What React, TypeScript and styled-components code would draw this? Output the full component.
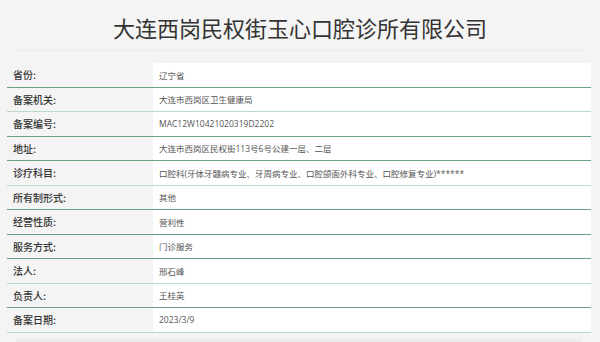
import React from 'react'
import styled, { createGlobalStyle } from 'styled-components'

type RowType = {
  label: string
  value: string
  soft?: boolean
}

const rows: RowType[] = [
  { label: '省份:', value: '辽宁省' },
  { label: '备案机关:', value: '大连市西岗区卫生健康局', soft: true },
  { label: '备案编号:', value: 'MAC12W10421020319D2202' },
  { label: '地址:', value: '大连市西岗区民权街113号6号公建一层、二层' },
  { label: '诊疗科目:', value: '口腔科(牙体牙髓病专业、牙周病专业、口腔颌面外科专业、口腔修复专业)******', soft: true },
  { label: '所有制形式:', value: '其他' },
  { label: '经营性质:', value: '营利性' },
  { label: '服务方式:', value: '门诊服务' },
  { label: '法人:', value: '邢石峰', soft: true },
  { label: '负责人:', value: '王桂英' },
  { label: '备案日期:', value: '2023/3/9', soft: true },
]

const GlobalStyle = createGlobalStyle`
  html, body {
    margin: 0;
    padding: 0;
    background: #f4f4f4;
    font-family: "Open Sans", "Noto Sans CJK SC", sans-serif;
  }
`

const App = () => {
  return (
    <Page>
      <GlobalStyle />
      <Header>
        <Title>大连西岗民权街玉心口腔诊所有限公司</Title>
      </Header>
      <InfoTable>
        {rows.map((row) => (
          <Row key={row.label} soft={row.soft}>
            <Label>{row.label}</Label>
            <Value>{row.value}</Value>
          </Row>
        ))}
      </InfoTable>
      <NextBox />
    </Page>
  )
}

const Page = styled.div`
  width: 600px;
  height: 342px;
  overflow: hidden;
`

const Header = styled.div`
  margin: 0 14px;
  height: 51px;
  border-bottom: 1px solid #ebebeb;
  display: flex;
  align-items: center;
  justify-content: center;
  padding-top: 4px;
  box-sizing: border-box;
`

const Title = styled.h1`
  margin: 0;
  font-family: "Noto Sans CJK SC", sans-serif;
  font-weight: 400;
  font-size: 22px;
  line-height: 1;
  color: #333;
`

const InfoTable = styled.div`
  margin: 12px 9px 0 7px;
  display: flex;
  flex-direction: column;
`

const Row = styled.div<{ soft?: boolean }>`
  display: grid;
  grid-template-columns: 146px 1fr;
  height: 24.5px;
  box-sizing: border-box;
  border-bottom: 1px solid ${(p) => (p.soft ? '#bcd9c6' : '#67a27f')};
`

const Label = styled.div`
  display: flex;
  align-items: center;
  padding-left: 6px;
  font-family: "Noto Sans CJK SC", sans-serif;
  font-size: 10px;
  font-weight: 500;
  color: #333;
`

const Value = styled.div`
  display: flex;
  align-items: center;
  padding-left: 6px;
  background: #fff;
  font-family: "Open Sans", "Noto Sans CJK SC", sans-serif;
  font-size: 8.5px;
  color: #555;
  white-space: nowrap;
`

const NextBox = styled.div`
  margin: 6px 19px 0 16px;
  height: 20px;
  background: #ececec;
`

export default App
